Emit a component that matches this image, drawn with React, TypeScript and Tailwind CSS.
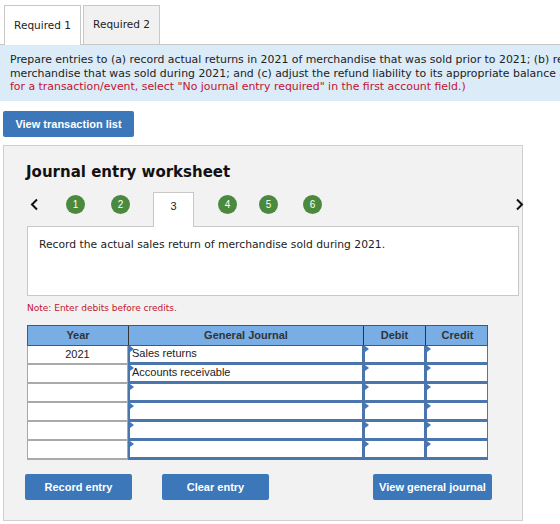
const rows = [
  { year: "2021", account: "Sales returns" },
  { year: "", account: "Accounts receivable" },
  { year: "", account: "" },
  { year: "", account: "" },
  { year: "", account: "" },
  { year: "", account: "" },
]

function Marker() {
  return (
    <span className="absolute left-0 top-0 w-0 h-0 border-t-[3px] border-b-[3px] border-l-[4px] border-t-transparent border-b-transparent border-l-[#3d78c2]" />
  )
}

function InputCell({ text }: { text?: string }) {
  return (
    <div className="relative h-[19px] bg-white border-l-2 border-b-[3px] border-r border-[#4a76ad] pl-[2px] text-[11px] leading-[15px] text-[#222] font-['Liberation_Sans',Arial,sans-serif]">
      <Marker />
      {text}
    </div>
  )
}

function StepCircle({ n }: { n: number }) {
  return (
    <div className="w-[19px] h-[19px] rounded-full bg-[#4b8a3e] text-white text-[10px] font-['Liberation_Sans',Arial,sans-serif] flex items-center justify-center">
      {n}
    </div>
  )
}

export default function App() {
  return (
    <div className="w-[560px] h-[524px] bg-white overflow-hidden font-['DejaVu_Sans',Verdana,sans-serif] text-[#222]">
      <div className="flex pl-[4px] pt-[5px]">
        <div className="w-[77px] h-[40px] bg-white border border-b-0 border-[#c8c8c8] flex items-center justify-center text-[10.5px] relative z-10 -mb-px">
          Required 1
        </div>
        <div className="w-[77px] h-[39px] ml-[2px] bg-[#f1f1f1] border border-b-0 border-[#c8c8c8] flex items-center justify-center text-[10.5px]">
          Required 2
        </div>
      </div>
      <div className="h-[57px] bg-[#dbebf8] border-t border-[#c8c8c8] px-[10px] pt-[8px] text-[10.9px] leading-[13.5px] whitespace-nowrap overflow-hidden">
        <div>Prepare entries to (a) record actual returns in 2021 of merchandise that was sold prior to 2021; (b) record actual returns of</div>
        <div>merchandise that was sold during 2021; and (c) adjust the refund liability to its appropriate balance at the end of 2021. (If no entry is required</div>
        <div className="text-[#c4122f]">for a transaction/event, select "No journal entry required" in the first account field.)</div>
      </div>
      <div className="pl-[3px] pt-[10px]">
        <button className="w-[131px] h-[26px] bg-[#3b77b9] rounded-[2px] text-white text-[11px] font-bold font-['Liberation_Sans',Arial,sans-serif]">
          View transaction list
        </button>
      </div>
      <div className="ml-[3px] mt-[8px] w-[520px] h-[376px] bg-[#f2f2f2] border border-[#cfcfcf] relative">
        <div className="pl-[22px] pt-[16px] text-[15px] font-bold text-[#111] leading-[20px]">Journal entry worksheet</div>
        <div className="relative h-[34px] mt-[10px]">
          <svg className="absolute left-[26px] top-[6px]" width="9" height="13" viewBox="0 0 9 13">
            <path d="M7 1.5 L2 6.5 L7 11.5" fill="none" stroke="#111" strokeWidth="2" />
          </svg>
          <div className="absolute left-[62px] top-[3px]"><StepCircle n={1} /></div>
          <div className="absolute left-[107px] top-[3px]"><StepCircle n={2} /></div>
          <div className="absolute left-[149px] top-0 w-[41px] h-[35px] bg-white border border-b-0 border-[#c8c8c8] z-10 flex items-center justify-center text-[11px] font-['Liberation_Sans',Arial,sans-serif] pb-[8px]">
            3
          </div>
          <div className="absolute left-[214px] top-[3px]"><StepCircle n={4} /></div>
          <div className="absolute left-[255px] top-[3px]"><StepCircle n={5} /></div>
          <div className="absolute left-[299px] top-[3px]"><StepCircle n={6} /></div>
          <svg className="absolute left-[511px] top-[6px]" width="9" height="13" viewBox="0 0 9 13">
            <path d="M2 1.5 L7 6.5 L2 11.5" fill="none" stroke="#111" strokeWidth="2" />
          </svg>
        </div>
        <div className="ml-[23px] w-[492px] h-[70px] bg-white border border-[#c8c8c8] pl-[11px] pt-[10px] text-[10.75px]">
          Record the actual sales return of merchandise sold during 2021.
        </div>
        <div className="ml-[23px] mt-[6px] text-[9px] text-[#c4122f]">Note: Enter debits before credits.</div>
        <div className="ml-[23px] mt-[9px] w-[461px] font-['Liberation_Sans',Arial,sans-serif]">
          <div className="grid grid-cols-[101px_235px_62px_63px] h-[21px] bg-[#78aee5] border border-[#555] text-[11px] font-bold text-[#333]">
            <div className="flex items-center justify-center border-r border-[#333]">Year</div>
            <div className="flex items-center justify-center border-r border-[#333]">General Journal</div>
            <div className="flex items-center justify-center border-r border-[#333]">Debit</div>
            <div className="flex items-center justify-center">Credit</div>
          </div>
          {rows.map((r, i) => (
            <div key={i} className="grid grid-cols-[101px_235px_62px_63px] h-[19px]">
              <div className="bg-white border-l border-b-2 border-r border-[#a9a9a9] text-[11px] text-center leading-[16px] text-[#222]">
                {r.year}
              </div>
              <InputCell text={r.account} />
              <InputCell />
              <InputCell />
            </div>
          ))}
        </div>
        <div className="flex ml-[21px] mt-[14px]">
          <button className="w-[107px] h-[26px] bg-[#3b77b9] rounded-[2px] text-white text-[11px] font-bold font-['Liberation_Sans',Arial,sans-serif]">
            Record entry
          </button>
          <button className="ml-[30px] w-[107px] h-[26px] bg-[#3b77b9] rounded-[2px] text-white text-[11px] font-bold font-['Liberation_Sans',Arial,sans-serif]">
            Clear entry
          </button>
          <button className="ml-[104px] w-[119px] h-[26px] bg-[#3b77b9] rounded-[2px] text-white text-[11px] font-bold font-['Liberation_Sans',Arial,sans-serif]">
            View general journal
          </button>
        </div>
      </div>
    </div>
  )
}
